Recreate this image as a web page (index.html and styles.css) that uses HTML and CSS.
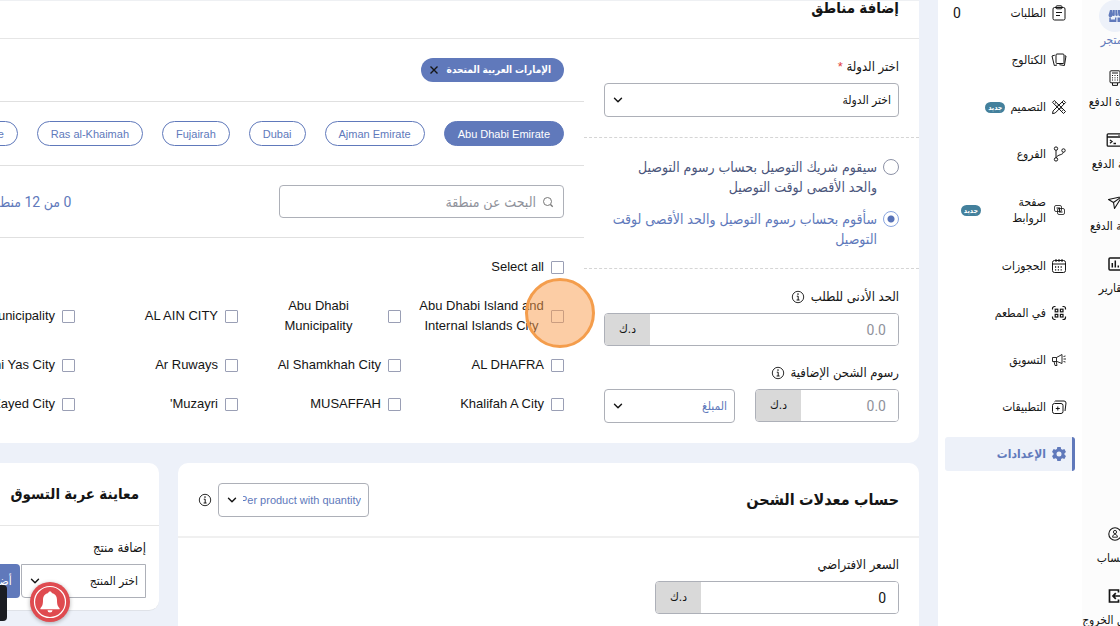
FILE: index.html
```html
<!DOCTYPE html>
<html lang="ar" dir="rtl">
<head>
    <meta charset="UTF-8">
    <meta name="viewport" content="width=device-width, initial-scale=1.0">
    <title>إضافة مناطق</title>
    <link rel="stylesheet" href="styles.css">
</head>
<body>
    <svg class="defs" width="0" height="0" aria-hidden="true">
        <symbol id="chevron" viewBox="0 0 10 10">
            <path d="M1.5 3.2 5 6.8 8.5 3.2" fill="none" stroke="currentColor" stroke-width="1.4" stroke-linecap="round" stroke-linejoin="round"/>
        </symbol>
        <symbol id="info" viewBox="0 0 14 14">
            <circle cx="7" cy="7" r="5.7" fill="none" stroke="currentColor" stroke-width=".9"/>
            <path d="M5.8 6.2H7.2V10M5.6 10H8.6" fill="none" stroke="currentColor" stroke-width="1"/>
            <circle cx="7" cy="4.1" r=".8" fill="currentColor"/>
        </symbol>
    </svg>

    <div class="page">
        <nav class="rail">
            <a class="rail-item active" href="#">
                <span class="rail-icon">
                    <svg viewBox="0 0 16 16" width="16" height="16" fill="currentColor"><path d="M3 2h2.4v5.2a1.7 1.7 0 0 1-3.9 0zM6 2h1.8v5.2a1.6 1.6 0 0 1-2.6 0zM8.3 2h1.8l.7 5.2a1.6 1.6 0 0 1-2.5 0zM10.7 2H13l1.5 5.2a1.7 1.7 0 0 1-3.2 0zM2.3 9.6h1.5v2H8V9.6h1.4V14H2.3zM10.5 9.6h3.2V14h-3.2z"/></svg>
                </span>
                <span>المتجر</span>
            </a>
            <a class="rail-item" href="#">
                <span class="rail-icon">
                    <svg viewBox="0 0 16 16" width="16" height="16" fill="none" stroke="currentColor"><rect x="3" y=".8" width="10" height="12" rx="1"/><path d="M5 3h6M5 5.5h1M7.5 5.5h1M10 5.5h1M5 7.8h1M7.5 7.8h1M10 7.8h1M5 10h1M7.5 10h1M10 10h1M5.5 13v2.4h5V13"/></svg>
                </span>
                <span>أجهزة الدفع</span>
            </a>
            <a class="rail-item" href="#">
                <span class="rail-icon">
                    <svg viewBox="0 0 18 16" width="18" height="16" fill="none" stroke="currentColor" stroke-width="1.3"><rect x="1.2" y="1.8" width="16" height="12.4" rx="1"/><path d="M1 5h16M4 8l2 1.6L4 11.2M7.5 11.5H10M12.5 3.4h1"/></svg>
                </span>
                <span>بوابة الدفع</span>
            </a>
            <a class="rail-item" href="#">
                <span class="rail-icon">
                    <svg viewBox="0 0 16 16" width="16" height="16" fill="none" stroke="currentColor" stroke-width="1.1" stroke-linejoin="round"><path d="M1.5 5.500 15 2.500 7.500 14.500 6.500 8.500zM6.500 8.500 15 2.500"/></svg>
                </span>
                <span>خدمة الدفع</span>
            </a>
            <a class="rail-item" href="#">
                <span class="rail-icon">
                    <svg viewBox="0 0 16 16" width="16" height="16" fill="none" stroke="currentColor" stroke-width="1.5"><rect x="2" y="2" width="13" height="12" rx="1"/><path d="M5.3 7v4.5M8.3 4.5v7M11.3 9.5v2"/></svg>
                </span>
                <span>التقارير</span>
            </a>
            <a class="rail-item rail-bottom" href="#">
                <span class="rail-icon">
                    <svg viewBox="0 0 16 16" width="16" height="16" fill="none" stroke="currentColor" stroke-width="1.1"><circle cx="8" cy="8" r="6.2"/><circle cx="8" cy="6" r="1.6" stroke-width=".9"/><path d="M5.600 11.200c0-3.800 4.800-3.800 4.800 0z" stroke-width=".9"/></svg>
                </span>
                <span>الحساب</span>
            </a>
            <a class="rail-item" href="#">
                <span class="rail-icon">
                    <svg viewBox="0 0 16 16" width="16" height="16" fill="none" stroke="currentColor" stroke-width="1.7"><path d="M11.5 4.500V2H2.500V14H11.500V11.500M15 8H6M8.800 5.200 6 8l2.800 2.800"/></svg>
                </span>
                <span>تسجيل الخروج</span>
            </a>
        </nav>

        <nav class="sidebar">
            <a class="menu-item" href="#">
                <svg viewBox="0 0 16 16" fill="none" stroke="currentColor"><rect x="2" y="2.500" width="12" height="12.500" rx="1.500"/><rect x="5" y=".8" width="6" height="3" rx="1"/><path d="M5 7.500h6M5 10.500h4"/></svg>
                <span>الطلبات</span>
                <span class="count">0</span>
            </a>
            <a class="menu-item" href="#">
                <svg viewBox="0 0 16 16" fill="none" stroke="currentColor" stroke-linejoin="round"><rect x="5" y="2" width="8" height="9.500" rx="1"/><path d="M3.800 3.200 1 4l2.300 9.500L6 13M13.800 3.800 15 4l-1.600 9.500-5-.8"/></svg>
                <span>الكتالوج</span>
            </a>
            <a class="menu-item" href="#">
                <svg viewBox="0 0 16 16" fill="none" stroke="currentColor" stroke-linejoin="round"><path d="M3.300 1.500 1.500 3.300l11 11.200 2-2zM5 3.500 3.800 4.600M7 5.500 6 6.500M10.500 9l-1 1M12.300 10.800l-1 1M12.600 1.500l2 2-10.400 10.500-2.700.6.600-2.700zM11 3l2 2"/></svg>
                <span>التصميم</span>
                <span class="badge">جديد</span>
            </a>
            <a class="menu-item" href="#">
                <svg viewBox="0 0 16 16" fill="none" stroke="currentColor"><circle cx="5" cy="2.600" r="1.700"/><circle cx="5" cy="13.400" r="1.700"/><circle cx="12.500" cy="4.500" r="1.700"/><path d="M5 4.300v7.400M12.300 6.200C12 9.500 6.500 8 5.300 11.700"/></svg>
                <span>الفروع</span>
            </a>
            <a class="menu-item tall" href="#">
                <svg viewBox="0 0 16 16" fill="none" stroke="currentColor" stroke-width=".8"><rect x="3.500" y="3.500" width="7" height="6" rx="1.500"/><rect x="6.500" y="6.500" width="7" height="6" rx="1.500"/><path d="M5.500 6h3v2.500M11.500 10h-3V7.500" stroke-width="1.200"/></svg>
                <span>صفحة الروابط</span>
                <span class="badge">جديد</span>
            </a>
            <a class="menu-item" href="#">
                <svg viewBox="0 0 16 16" fill="none" stroke="currentColor"><rect x="1.500" y="2.500" width="13" height="12" rx="2"/><path d="M1.500 6h13M5 1v3M8 1v3M11 1v3"/><path d="M4 9h8M4 11.800h8" stroke-dasharray="1.200 1.600" stroke-width="1.300"/></svg>
                <span>الحجوزات</span>
            </a>
            <a class="menu-item" href="#">
                <svg viewBox="0 0 16 16" fill="none" stroke="currentColor" stroke-width="1.200"><path d="M1.500 4.500v-1a2 2 0 0 1 2-2h1M11.500 1.500h1a2 2 0 0 1 2 2v1M14.500 11.500v1a2 2 0 0 1-2 2h-1M4.500 14.500h-1a2 2 0 0 1-2-2v-1"/><rect x="4.200" y="4.200" width="2.600" height="2.600"/><rect x="9.400" y="4.200" width="2.600" height="2.600"/><rect x="4.200" y="9.400" width="2.600" height="2.600"/><rect x="9.400" y="9.400" width="2.600" height="2.600"/></svg>
                <span>في المطعم</span>
            </a>
            <a class="menu-item" href="#">
                <svg viewBox="0 0 16 16" fill="none" stroke="currentColor" stroke-width=".9" stroke-linejoin="round"><path d="M1.500 5.500h4L11 2.500v9L6 9.500H1.500zM3 9.500l1 4h2l-.8-4M5.500 5.500v4M12.500 4.500 14.500 4M12.500 7h2.500M12.500 9.500l2 .5"/></svg>
                <span>التسويق</span>
            </a>
            <a class="menu-item" href="#">
                <svg viewBox="0 0 16 16" fill="none" stroke="currentColor"><rect x="1.500" y="4.500" width="10.500" height="10" rx="2"/><path d="M3.500 2.800 4.500 2h8.500a2 2 0 0 1 2 2L14 12M6.800 7.500v4M4.800 9.500h4"/></svg>
                <span>التطبيقات</span>
            </a>
            <a class="menu-item active" href="#">
                <svg viewBox="0 0 16 16"><path fill="currentColor" fill-rule="evenodd" d="M6.300 1h3.400l.4 2 1.300.8 2-.7 1.600 2.900L13.500 7.200v1.600l1.500 1.300-1.600 2.800-2-.6-1.300.7-.4 2H6.300l-.4-2-1.300-.7-2 .6L1 10.100l1.500-1.300V7.200L1 6l1.600-2.900 2 .7L5.900 3zM8 5.500a2.500 2.500 0 1 0 0 5 2.500 2.500 0 0 0 0-5z"/></svg>
                <span>الإعدادات</span>
            </a>
        </nav>

        <main class="main">
            <section class="card regions">
                <h2 class="regions-title">إضافة مناطق</h2>
                <div class="regions-body">
                    <form class="options">
                        <div class="option-block country">
                            <label for="country">اختر الدولة <span class="required">*</span></label>
                            <div class="select-box">
                                <select id="country"><option>اختر الدولة</option></select>
                                <svg class="chevron"><use href="#chevron"/></svg>
                            </div>
                        </div>
                        <div class="option-block fees">
                            <label class="radio">
                                <input type="radio" name="fee">
                                <span>سيقوم شريك التوصيل بحساب رسوم التوصيل<br>والحد الأقصى لوقت التوصيل</span>
                            </label>
                            <label class="radio">
                                <input type="radio" name="fee" checked>
                                <span>سأقوم بحساب رسوم التوصيل والحد الأقصى لوقت<br>التوصيل</span>
                            </label>
                        </div>
                        <div class="option-block amounts">
                            <div>
                                <label for="minOrder">الحد الأدنى للطلب <svg class="info"><use href="#info"/></svg></label>
                                <div class="money">
                                    <input type="text" id="minOrder" placeholder="0.0">
                                    <span>د.ك</span>
                                </div>
                            </div>
                            <div>
                                <label for="extraFee">رسوم الشحن الإضافية <svg class="info"><use href="#info"/></svg></label>
                                <div class="money-row">
                                    <div class="money">
                                        <input type="text" id="extraFee" placeholder="0.0">
                                        <span>د.ك</span>
                                    </div>
                                    <div class="select-box blue">
                                        <select aria-label="نوع الرسوم"><option>المبلغ</option></select>
                                        <svg class="chevron"><use href="#chevron"/></svg>
                                    </div>
                                </div>
                            </div>
                        </div>
                    </form>

                    <div class="areas">
                        <div class="areas-row">
                            <span class="chip">الإمارات العربية المتحدة
                                <button type="button" aria-label="إزالة"><svg viewBox="0 0 10 10" width="10" height="10"><path d="M1.500 1.500l7 7M8.500 1.500l-7 7" stroke="currentColor" stroke-width="1.400"/></svg></button>
                            </span>
                        </div>
                        <div class="areas-row pills">
                            <button type="button" class="pill selected">Abu Dhabi Emirate</button>
                            <button type="button" class="pill">Ajman Emirate</button>
                            <button type="button" class="pill">Dubai</button>
                            <button type="button" class="pill">Fujairah</button>
                            <button type="button" class="pill">Ras al-Khaimah</button>
                            <button type="button" class="pill">Sharjah Emirate</button>
                        </div>
                        <div class="areas-row search-row">
                            <div class="search">
                                <svg viewBox="0 0 12 12" width="12" height="12"><circle cx="5.500" cy="5.500" r="4" fill="none" stroke="currentColor"/><path d="M8.500 8.500l2.200 2.300" stroke="currentColor" stroke-width="1.300"/></svg>
                                <input type="text" placeholder="البحث عن منطقة" aria-label="البحث عن منطقة">
                            </div>
                            <span class="total">0 من 12 منطقة</span>
                        </div>
                        <div class="checks">
                            <label class="check all"><input type="checkbox"><span>Select all</span></label>
                            <label class="check target"><input type="checkbox"><span>Abu Dhabi Island and Internal Islands City</span></label>
                            <label class="check"><input type="checkbox"><span>Abu Dhabi Municipality</span></label>
                            <label class="check"><input type="checkbox"><span>AL AIN CITY</span></label>
                            <label class="check"><input type="checkbox"><span>Al Ain Municipality</span></label>
                            <label class="check"><input type="checkbox"><span>AL DHAFRA</span></label>
                            <label class="check"><input type="checkbox"><span>Al Shamkhah City</span></label>
                            <label class="check"><input type="checkbox"><span>Ar Ruways</span></label>
                            <label class="check"><input type="checkbox"><span>Bani Yas City</span></label>
                            <label class="check"><input type="checkbox"><span>Khalifah A City</span></label>
                            <label class="check"><input type="checkbox"><span>MUSAFFAH</span></label>
                            <label class="check"><input type="checkbox"><span>Muzayri'</span></label>
                            <label class="check"><input type="checkbox"><span>Zayed City</span></label>
                        </div>
                    </div>
                </div>
            </section>

            <div class="bottom">
                <section class="card rates">
                    <header class="rates-head">
                        <h2>حساب معدلات الشحن</h2>
                        <div class="select-box blue method">
                            <select aria-label="طريقة الحساب"><option>Per product with quantity</option></select>
                            <svg class="chevron"><use href="#chevron"/></svg>
                        </div>
                        <svg class="info"><use href="#info"/></svg>
                    </header>
                    <div class="rates-body">
                        <label for="defaultPrice">السعر الافتراضي</label>
                        <div class="money">
                            <input type="text" id="defaultPrice" value="0">
                            <span>د.ك</span>
                        </div>
                    </div>
                </section>

                <section class="card preview">
                    <h2>معاينة عربة التسوق</h2>
                    <div class="preview-body">
                        <label for="product">إضافة منتج</label>
                        <div class="product-row">
                            <div class="select-box square">
                                <select id="product"><option>اختر المنتج</option></select>
                                <svg class="chevron"><use href="#chevron"/></svg>
                            </div>
                            <button type="button" class="add">أضف</button>
                        </div>
                    </div>
                </section>
            </div>
        </main>
    </div>

    <div class="drawer-tab"></div>
    <button type="button" class="bell" aria-label="الإشعارات">
        <svg viewBox="0 0 40 40" width="40" height="40"><circle cx="20" cy="20" r="15.500" fill="none" stroke="#fff" stroke-width="1.200"/><path fill="#fff" d="M20 9.500c1.200 0 1.700.7 1.800 1.600 3.600.8 5.200 3.500 5.200 7 0 4.700.8 6.400 2.600 8.200v.9H10.400v-.9c1.800-1.800 2.600-3.500 2.600-8.200 0-3.500 1.600-6.200 5.200-7 .1-.9.600-1.600 1.800-1.600zM17.500 28.200h5a2.500 2.200 0 0 1-5 0z"/></svg>
    </button>
</body>
</html>
```
FILE: styles.css
```css
* {
    box-sizing: border-box;
}

body {
    margin: 0;
    overflow: hidden;
    background-color: #edf1f9;
    color: #151515;
    font-family: "Liberation Sans", "DejaVu Sans Condensed", "DejaVu Sans", sans-serif;
    font-size: 12px;
    line-height: 16px;
}

a {
    color: inherit;
    text-decoration: none;
}

button,
input,
select {
    font-family: inherit;
    font-size: inherit;
    color: inherit;
}

label {
    font-size: 13px;
}

h2 {
    margin: 0;
    font-size: 15px;
    line-height: 20px;
}

.defs {
    position: absolute;
}

.page {
    display: flex;
    height: 100vh;
    overflow: hidden;
}

/* icon rail */
.rail {
    display: flex;
    flex-direction: column;
    flex: 0 0 66px;
    gap: 14px;
    min-width: 0;
    margin: 0 -28px -2px 0;
    background-color: #fcfcfc;
}

.rail-item {
    display: flex;
    flex-direction: column;
    align-items: center;
    white-space: nowrap;
}

.rail-icon {
    display: flex;
    align-items: center;
    justify-content: center;
    width: 32px;
    height: 32px;
    border-radius: 50%;
}

.rail-item.active {
    color: #6079bb;
}

.rail-item.active .rail-icon {
    background-color: #edf1f9;
}

.rail-bottom {
    margin-top: auto;
}

/* menu */
.sidebar {
    display: flex;
    flex-direction: column;
    flex: 0 0 144px;
    gap: 13px;
    margin-top: -4px;
    padding: 0 7px;
    background-color: #fff;
}

.menu-item {
    display: flex;
    align-items: center;
    gap: 5px;
    min-height: 34px;
    padding: 0 8px;
    border-right: 0 solid #6079bb;
    border-radius: 3px;
}

.menu-item svg {
    flex: none;
    width: 16px;
    height: 16px;
}

.menu-item.tall {
    min-height: 52px;
}

.menu-item.tall > span:nth-child(2) {
    flex: 0 0 60px;
}

.menu-item.active {
    padding-right: 5px;
    border-right-width: 3px;
    background-color: #edf1f9;
    color: #6079bb;
    font-weight: bold;
}

.count {
    margin-right: auto;
    font-family: Roboto, sans-serif;
    font-size: 14px;
}

.badge {
    padding: 0 3px;
    border-radius: 6px;
    background-color: #43809c;
    color: #fff;
    font-size: 7px;
    font-weight: bold;
    line-height: 11px;
}

/* content */
.main {
    flex: 1;
    min-width: 0;
    margin: 0 19px 0 -33px;
}

.card {
    border-radius: 10px;
    background-color: #fff;
}

.regions {
    border-top: 1px solid #eef0f3;
    border-top-left-radius: 0;
    border-top-right-radius: 0;
}

.regions-title {
    height: 38px;
    padding: 0 20px;
    border-bottom: 1px solid #e6e6e6;
    line-height: 14px;
}

.regions-body {
    display: grid;
    grid-template-columns: 335px minmax(0, 1fr);
}

.option-block {
    padding: 0 20px;
    border-bottom: 1px dashed #d5d5d5;
}

.country {
    padding-top: 20px;
    padding-bottom: 20px;
}

.country label {
    display: block;
    margin-bottom: 8px;
}

.required {
    color: #e03c3c;
}

.fees {
    display: grid;
    gap: 12px;
    padding-top: 19px;
    padding-bottom: 19px;
}

.radio {
    display: flex;
    gap: 6px;
    color: #4b567c;
    font-size: 14px;
    line-height: 20px;
    white-space: nowrap;
}

.radio:has(:checked) {
    color: #6079bb;
}

.radio input {
    flex: none;
    appearance: none;
    width: 16px;
    height: 16px;
    margin: 2px 0;
    border: 1px solid #8d92a6;
    border-radius: 50%;
}

.radio input:checked {
    border: 1px solid #89a5e0;
    background: radial-gradient(circle, #5873b8 3px, #fff 4px);
}

.amounts {
    display: grid;
    grid-template-columns: minmax(0, 1fr);
    gap: 19px;
    padding-top: 20px;
    padding-bottom: 20px;
    border-bottom: 0;
}

.amounts label {
    display: flex;
    align-items: center;
    gap: 6px;
    margin-bottom: 8px;
}

.info {
    flex: none;
    width: 14px;
    height: 14px;
}

.money {
    display: flex;
    flex: 1;
    height: 33px;
    border: 1px solid #adb0b8;
    border-radius: 4px;
    overflow: hidden;
}

.money input {
    flex: 1;
    min-width: 0;
    padding: 0 12px;
    border: 0;
    font-family: Roboto, sans-serif;
    font-size: 14px;
}

.money input::placeholder {
    color: #8f929b;
}

.money span {
    flex: 0 0 45px;
    background-color: #d9d9d9;
    line-height: 31px;
    text-align: center;
}

.money-row {
    display: flex;
    gap: 20px;
}

.money-row .select-box {
    flex: 0 0 131px;
}

.select-box {
    position: relative;
}

.select-box select {
    display: block;
    appearance: none;
    width: 100%;
    height: 34px;
    padding: 0 7px 0 24px;
    border: 1px solid #adb0b8;
    border-radius: 4px;
    background-color: #fff;
}

.select-box.blue select {
    color: #6079bb;
}

.chevron {
    position: absolute;
    top: 12px;
    left: 9px;
    width: 10px;
    height: 10px;
    pointer-events: none;
}

/* areas */
.areas-row {
    display: flex;
    align-items: center;
    padding: 19px 20px;
    border-bottom: 1px solid #e0e0e0;
}

.chip {
    display: flex;
    align-items: center;
    gap: 8px;
    height: 24px;
    padding: 0 13px 0 8px;
    border-radius: 12px;
    background-color: #6079bb;
    color: #fff;
    font-weight: bold;
    font-size: 10px;
}

.chip button {
    display: flex;
    padding: 0;
    border: 0;
    background: none;
    color: #151515;
}

.pills {
    gap: 19px;
}

.pill {
    flex: none;
    height: 25px;
    padding: 0 13px;
    border: 1px solid #6079bb;
    border-radius: 13px;
    background-color: #fff;
    color: #6079bb;
    font-size: 11px;
}

.pill.selected {
    background-color: #6079bb;
    color: #fff;
}

.search-row {
    justify-content: space-between;
}

.search {
    display: flex;
    align-items: center;
    gap: 4px;
    width: 285px;
    height: 33px;
    padding: 0 9px;
    border: 1px solid #adb0b8;
    border-radius: 4px;
    color: #777;
}

.search input {
    flex: 1;
    min-width: 0;
    border: 0;
    font-size: 14px;
}

.search input::placeholder {
    color: #8f929b;
}

.total {
    color: #6079bb;
    font-family: Roboto, "DejaVu Sans Condensed", "DejaVu Sans", sans-serif;
    font-size: 14px;
    white-space: nowrap;
}

.checks {
    display: grid;
    grid-template-columns: repeat(4, 163px);
    row-gap: 19px;
    padding: 19px 20px;
}

.check {
    position: relative;
    display: flex;
    align-items: center;
    gap: 7px;
    font-size: 13px;
    line-height: 20px;
}

.check.all {
    grid-column: 1 / -1;
}

.check span {
    max-width: 125px;
    text-align: center;
}

.check input {
    flex: none;
    appearance: none;
    width: 13px;
    height: 13px;
    margin: 0;
    border: 1px solid #9a9fb5;
    border-radius: 1px;
}

/* click highlight */
.target::after {
    content: "";
    position: absolute;
    top: -18px;
    right: -31px;
    width: 64px;
    height: 64px;
    border: 3px solid #f49d4c;
    border-radius: 50%;
    background-color: rgba(250, 155, 75, 0.5);
    pointer-events: none;
}

/* bottom cards */
.bottom {
    display: grid;
    grid-template-columns: minmax(0, 1fr) 192px;
    align-items: start;
    gap: 19px;
    margin-top: 20px;
}

.rates {
    min-height: 200px;
}

.rates-head {
    display: flex;
    align-items: center;
    gap: 6px;
    padding: 20px 20px 19px;
    border-bottom: 2px solid #f0f0f0;
}

.rates-head h2 {
    margin-left: auto;
    font-size: 16px;
}

.method {
    width: 151px;
}

.method select {
    font-size: 11px;
}

.rates-body {
    padding: 19px 20px;
}

.rates-body label {
    display: block;
    margin-bottom: 8px;
}

.rates-body .money {
    width: 244px;
}

.preview {
    border-bottom: 1px solid #dfe2e8;
}

.preview h2 {
    padding: 21px 20px;
    border-bottom: 1px solid #e6e6e6;
}

.preview-body {
    padding: 14px 13px 12px;
}

.preview-body label {
    display: block;
    margin-bottom: 8px;
}

.product-row {
    display: flex;
    gap: 1px;
}

.product-row .select-box {
    flex: 0 0 125px;
}

.square select {
    border-radius: 0 0 0 4px;
}

.add {
    flex: 1;
    border: 0;
    border-radius: 4px;
    background-color: #6079bb;
    color: #fff;
}

/* floating things over the page */
.drawer-tab {
    position: fixed;
    bottom: 5px;
    left: 0;
    width: 7px;
    height: 36px;
    border-radius: 0 4px 4px 0;
    background-color: #1b1d22;
}

.bell {
    position: fixed;
    bottom: 4px;
    left: 30px;
    width: 40px;
    height: 40px;
    padding: 0;
    border: 0;
    border-radius: 50%;
    background-color: #df4b50;
    box-shadow: 0 1px 4px rgba(0, 0, 0, 0.3);
}
```
